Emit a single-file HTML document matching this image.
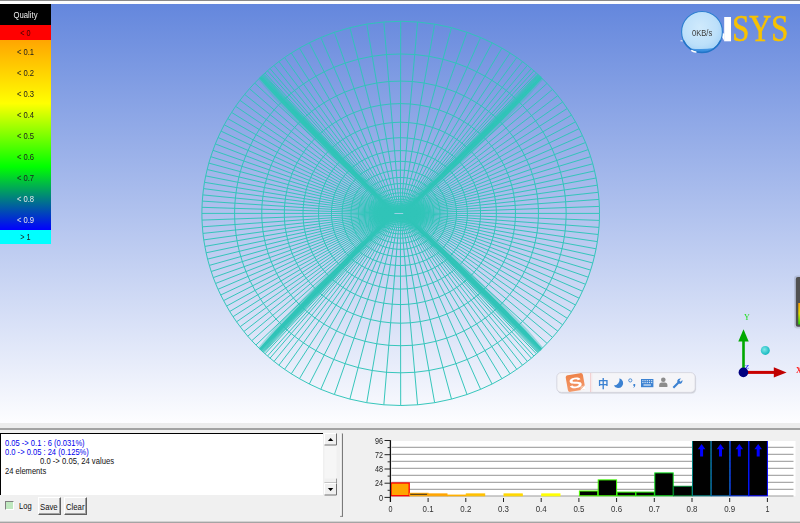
<!DOCTYPE html>
<html><head><meta charset="utf-8"><title>Quality</title>
<style>
html,body{margin:0;padding:0;background:#f0f0f0;}
body{width:800px;height:523px;overflow:hidden;position:relative;font-family:"Liberation Sans","Noto Sans CJK SC",sans-serif;}
#root{position:absolute;left:0;top:0;width:800px;height:523px;overflow:hidden;background:#f0f0f0;opacity:0.999;will-change:opacity;}
#topline{position:absolute;left:0;top:0;width:800px;height:1px;background:#8a8a8a;}
#topwhite{position:absolute;left:0;top:1px;width:800px;height:3px;background:#fdfdfd;}
#view{position:absolute;left:0;top:4px;width:800px;height:419px;background:linear-gradient(to bottom,#6487dd 0%,#fdfdff 100%);}
#sep1{position:absolute;left:0;top:423px;width:800px;height:5px;background:#ececec;}
#sep2{position:absolute;left:0;top:428px;width:800px;height:2px;background:#a2a2a2;}
#bottomline{position:absolute;left:0;top:521px;width:800px;height:2px;background:linear-gradient(to bottom,#d2d2d2 0,#d2d2d2 50%,#a4a4a4 50%,#a4a4a4 100%);}
svg{position:absolute;left:0;top:0;will-change:transform;}
svg text{font-family:"Liberation Sans",sans-serif;}
#log{position:absolute;left:0;top:433px;width:323px;height:62px;background:#fff;border-left:1px solid #000;border-top:1px solid #000;box-sizing:border-box;}
.t{position:absolute;white-space:nowrap;font-size:9px;line-height:10px;transform-origin:0 0;}
.btn{position:absolute;top:497px;height:18px;box-sizing:border-box;background:#f0f0f0;border-top:1px solid #fff;border-left:1px solid #fff;border-right:1px solid #606060;border-bottom:1px solid #606060;box-shadow:inset -1px -1px 0 #a0a0a0;}
</style></head><body><div id="root">
<div id="topline"></div><div id="topwhite"></div>
<div id="view"></div>
<div id="sep1"></div><div id="sep2"></div>
<div id="log"></div>
<div class="t" style="left:5px;top:437.7px;color:#0000ee;transform:scaleX(0.84)">0.05 -&gt; 0.1 : 6 (0.031%)</div>
<div class="t" style="left:5px;top:447px;color:#0000ee;transform:scaleX(0.84)">0.0 -&gt; 0.05 : 24 (0.125%)</div>
<div class="t" style="left:39.8px;top:456.4px;color:#111;transform:scaleX(0.853)">0.0 -&gt; 0.05, 24 values</div>
<div class="t" style="left:5px;top:465.6px;color:#111;transform:scaleX(0.84)">24 elements</div>
<div style="position:absolute;left:5px;top:501px;width:9px;height:9px;box-sizing:border-box;background:#bfe8bf;border-top:1px solid #808080;border-left:1px solid #808080;border-right:1px solid #fff;border-bottom:1px solid #fff;"></div>
<div class="t" style="left:19px;top:501.2px;color:#111;transform:scaleX(0.84)">Log</div>
<div class="btn" style="left:38px;width:23px;"></div>
<div class="t" style="left:40px;top:501.8px;color:#111;transform:scaleX(0.86)">Save</div>
<div class="btn" style="left:64px;width:23px;"></div>
<div class="t" style="left:66px;top:501.8px;color:#111;transform:scaleX(0.86)">Clear</div>
<div id="bottomline"></div>
<svg width="800" height="523" viewBox="0 0 800 523">
<defs>
<linearGradient id="lg" x1="0" y1="0" x2="0" y2="1">
<stop offset="0" stop-color="#ffa500"/><stop offset="0.3333" stop-color="#ffff00"/><stop offset="0.6667" stop-color="#00ff00"/><stop offset="1" stop-color="#0000ff"/>
</linearGradient>
<radialGradient id="bub" cx="0.45" cy="0.4" r="0.6"><stop offset="0" stop-color="#d0eafc"/><stop offset="0.7" stop-color="#bde0fa"/><stop offset="1" stop-color="#a8d4f7"/></radialGradient>
<radialGradient id="cy" cx="0.4" cy="0.4" r="0.6"><stop offset="0" stop-color="#7fe8e8"/><stop offset="1" stop-color="#14b8c0"/></radialGradient>
<linearGradient id="cres" x1="0" y1="0" x2="0" y2="1"><stop offset="0" stop-color="#9ccdf4"/><stop offset="0.45" stop-color="#4a9be6"/><stop offset="1" stop-color="#2f86dc"/></linearGradient>
<linearGradient id="sg" x1="0" y1="0" x2="0" y2="1"><stop offset="0" stop-color="#ee8248"/><stop offset="1" stop-color="#f4996a"/></linearGradient>
<radialGradient id="blob" cx="0.5" cy="0.5" r="0.5"><stop offset="0" stop-color="#30c4b8" stop-opacity="1"/><stop offset="0.5" stop-color="#30c4b8" stop-opacity="0.9"/><stop offset="1" stop-color="#30c4b8" stop-opacity="0"/></radialGradient>
<linearGradient id="bar2" x1="0" y1="0" x2="0" y2="1"><stop offset="0" stop-color="#ffa000"/><stop offset="0.5" stop-color="#e0e000"/><stop offset="1" stop-color="#20e000"/></linearGradient>
<clipPath id="vp"><rect x="0" y="4" width="800" height="419"/></clipPath>
</defs>
<!-- mesh -->
<g transform="translate(400.7 213.4) scale(1.0349 1)" fill="none" stroke="#30c4b8" stroke-width="0.95" stroke-linejoin="round">
<path d="M135.8 -135.8L132.9 -138.7L128.7 -142.6L122.4 -148L117.7 -151.8L112.2 -155.9L105.7 -160.4L97.8 -165.3L88.3 -170.6L77.2 -175.9L64.1 -181.1L49.1 -185.7L32.8 -189.3L16.3 -191.4L0 -192.1L-16.3 -191.4L-32.8 -189.3L-49.1 -185.7L-64.1 -181.1L-77.2 -175.9L-88.3 -170.6L-97.8 -165.3L-105.7 -160.4L-112.2 -155.9L-117.7 -151.8L-122.4 -148L-126.3 -144.8L-131.1 -140.4L-134.3 -137.4L-141.1 -130.4L-146.1 -124.7L-150.8 -119L-155.3 -113.1L-159.5 -107.1L-163.4 -101L-167.1 -94.8L-170.5 -88.6L-173.6 -82.3L-176.5 -75.9L-179.1 -69.5L-181.4 -63.1L-183.5 -56.7L-185.4 -50.3L-187 -43.9L-188.4 -37.5L-189.6 -31.1L-190.5 -24.8L-191.2 -18.5L-191.7 -12.3L-192 -6.1L-192.1 0L-192 6.7L-191.6 13.4L-191.1 20L-190.3 26.5L-189.2 33L-188 39.4L-186.6 45.7L-184.9 52L-183.1 58.1L-181.1 64.2L-178.9 70.1L-176.5 75.9L-173.9 81.6L-171.1 87.2L-168.2 92.7L-165.2 98.1L-162 103.3L-158.6 108.4L-155.1 113.3L-151.5 118.1L-147.8 122.8L-143.9 127.3L-139.9 131.6L-135.8 135.8L-132.9 138.7L-128.7 142.6L-122.4 148L-117.7 151.8L-112.2 155.9L-105.7 160.4L-97.8 165.3L-88.3 170.6L-77.2 175.9L-64.1 181.1L-49.1 185.7L-32.8 189.3L-16.3 191.4L0 192.1L16.3 191.4L32.8 189.3L49.1 185.7L64.1 181.1L77.2 175.9L88.3 170.6L97.8 165.3L105.7 160.4L112.2 155.9L117.7 151.8L122.4 148L126.3 144.8L131.1 140.4L134.3 137.4L141.4 130L146.7 124L151.8 117.8L156.5 111.4L160.9 104.9L165 98.3L168.9 91.6L172.4 84.8L175.6 77.8L178.6 70.9L181.2 63.8L183.5 56.7L185.6 49.6L187.3 42.5L188.8 35.4L190 28.2L190.9 21.1L191.6 14L192 7L192.1 0L192 -7L191.6 -14L190.9 -21.1L190 -28.2L188.8 -35.4L187.3 -42.5L185.6 -49.6L183.5 -56.7L181.2 -63.8L178.6 -70.9L175.6 -77.8L172.4 -84.8L168.9 -91.6L165 -98.3L160.9 -104.9L156.5 -111.4L151.8 -117.8L146.7 -124L141.4 -130ZM113.2 -112.7L110.7 -115.1L107.2 -118.4L102 -122.9L98.1 -126L93.5 -129.4L88.1 -133.1L81.4 -137.2L73.5 -141.6L64.3 -146L53.4 -150.3L40.8 -154.2L27.3 -157.1L13.6 -158.9L0 -159.4L-13.7 -158.9L-27.5 -157.1L-41.1 -154.2L-53.7 -150.3L-64.7 -146L-73.9 -141.6L-81.9 -137.2L-88.6 -133.1L-94 -129.4L-98.6 -126L-102.5 -122.9L-105.8 -120.2L-109.8 -116.5L-112.4 -114L-118.2 -108.2L-122.3 -103.5L-126.2 -98.7L-129.9 -93.8L-133.4 -88.9L-136.7 -83.8L-139.7 -78.7L-142.5 -73.5L-145.1 -68.3L-147.5 -63L-149.7 -57.7L-151.6 -52.4L-153.4 -47.1L-154.9 -41.8L-156.3 -36.4L-157.4 -31.1L-158.4 -25.8L-159.1 -20.6L-159.7 -15.4L-160.2 -10.2L-160.4 -5.1L-160.5 0L-160.4 5.6L-160.1 11.1L-159.6 16.6L-159 22L-158.1 27.4L-157.1 32.7L-155.9 38L-154.5 43.1L-153 48.2L-151.3 53.3L-149.5 58.2L-147.5 63L-145.4 67.8L-143.1 72.4L-140.7 77L-138.1 81.4L-135.5 85.7L-132.7 89.9L-129.8 94L-126.8 98L-123.7 101.9L-120.5 105.6L-117.2 109.2L-113.8 112.7L-111.3 115.1L-107.8 118.4L-102.5 122.9L-98.6 126L-94 129.4L-88.6 133.1L-81.9 137.2L-73.9 141.6L-64.7 146L-53.7 150.3L-41.1 154.2L-27.5 157.1L-13.7 158.9L0 159.4L13.6 158.9L27.3 157.1L40.8 154.2L53.4 150.3L64.3 146L73.5 141.6L81.4 137.2L88.1 133.1L93.5 129.4L98.1 126L102 122.9L105.2 120.2L109.2 116.5L111.8 114L117.8 107.9L122.2 102.9L126.4 97.8L130.3 92.5L134 87.1L137.4 81.6L140.6 76L143.5 70.3L146.2 64.6L148.6 58.8L150.8 53L152.7 47.1L154.4 41.2L155.9 35.3L157.1 29.4L158.1 23.4L158.9 17.5L159.4 11.7L159.7 5.8L159.9 0L159.7 -5.8L159.4 -11.7L158.9 -17.5L158.1 -23.4L157.1 -29.4L155.9 -35.3L154.4 -41.2L152.7 -47.1L150.8 -53L148.6 -58.8L146.2 -64.6L143.5 -70.3L140.6 -76L137.4 -81.6L134 -87.1L130.3 -92.5L126.4 -97.8L122.2 -102.9L117.8 -107.9ZM94.3 -93.6L92.3 -95.6L89.3 -98.3L85 -102L81.7 -104.6L77.9 -107.4L73.4 -110.5L67.8 -113.9L61.2 -117.5L53.5 -121.2L44.4 -124.7L34 -127.9L22.7 -130.4L11.3 -131.9L-0.1 -132.3L-11.5 -131.9L-23.1 -130.4L-34.5 -127.9L-45 -124.7L-54.2 -121.2L-62 -117.5L-68.7 -113.9L-74.3 -110.5L-78.8 -107.4L-82.7 -104.6L-86 -102L-88.7 -99.7L-92.2 -96.7L-94.4 -94.7L-99.1 -89.8L-102.5 -85.9L-105.8 -82L-108.9 -77.9L-111.8 -73.8L-114.5 -69.6L-117 -65.3L-119.3 -61L-121.5 -56.7L-123.5 -52.3L-125.3 -47.9L-126.9 -43.5L-128.3 -39.1L-129.6 -34.7L-130.7 -30.2L-131.7 -25.8L-132.5 -21.5L-133.1 -17.1L-133.6 -12.8L-134 -8.5L-134.2 -4.2L-134.2 0L-134.2 4.6L-133.9 9.2L-133.5 13.8L-133 18.3L-132.3 22.7L-131.4 27.1L-130.4 31.5L-129.3 35.8L-128 40L-126.6 44.2L-125.1 48.3L-123.5 52.3L-121.7 56.2L-119.8 60.1L-117.8 63.9L-115.7 67.6L-113.5 71.1L-111.2 74.6L-108.8 78L-106.3 81.4L-103.7 84.6L-101 87.7L-98.3 90.7L-95.5 93.6L-93.4 95.6L-90.4 98.3L-86 102L-82.7 104.6L-78.8 107.4L-74.3 110.5L-68.7 113.9L-62 117.5L-54.2 121.2L-45 124.7L-34.5 127.9L-23.1 130.4L-11.5 131.9L-0.1 132.3L11.3 131.9L22.7 130.4L34 127.9L44.4 124.7L53.5 121.2L61.2 117.5L67.8 113.9L73.4 110.5L77.9 107.4L81.7 104.6L85 102L87.7 99.7L91.1 96.7L93.2 94.7L98.2 89.6L101.8 85.4L105.3 81.1L108.6 76.8L111.6 72.3L114.4 67.7L117.1 63.1L119.5 58.4L121.7 53.6L123.8 48.8L125.6 44L127.2 39.1L128.6 34.2L129.8 29.3L130.8 24.4L131.7 19.5L132.3 14.6L132.7 9.7L133 4.8L133.1 0L133 -4.8L132.7 -9.7L132.3 -14.6L131.7 -19.5L130.8 -24.4L129.8 -29.3L128.6 -34.2L127.2 -39.1L125.6 -44L123.8 -48.8L121.7 -53.6L119.5 -58.4L117.1 -63.1L114.4 -67.7L111.6 -72.3L108.6 -76.8L105.3 -81.1L101.8 -85.4L98.2 -89.6ZM78.7 -77.7L77 -79.3L74.5 -81.6L70.9 -84.6L68.2 -86.8L65 -89.1L61.2 -91.7L56.6 -94.5L51 -97.6L44.6 -100.6L37 -103.5L28.3 -106.2L18.9 -108.2L9.3 -109.4L-0.1 -109.8L-9.7 -109.4L-19.4 -108.2L-29 -106.2L-37.9 -103.5L-45.6 -100.6L-52.1 -97.6L-57.7 -94.5L-62.4 -91.7L-66.3 -89.1L-69.5 -86.8L-72.3 -84.6L-74.6 -82.8L-77.5 -80.3L-79.1 -78.8L-83.3 -74.5L-86.1 -71.3L-88.9 -68L-91.4 -64.7L-93.8 -61.2L-96 -57.7L-98.1 -54.2L-100.1 -50.6L-101.9 -47L-103.5 -43.4L-105 -39.8L-106.3 -36.1L-107.5 -32.4L-108.6 -28.8L-109.5 -25.1L-110.3 -21.4L-111 -17.8L-111.5 -14.2L-111.9 -10.6L-112.2 -7L-112.4 -3.5L-112.4 0L-112.4 3.8L-112.2 7.6L-111.9 11.4L-111.4 15.2L-110.8 18.9L-110.1 22.5L-109.3 26.1L-108.4 29.7L-107.3 33.2L-106.1 36.7L-104.9 40.1L-103.5 43.4L-102 46.7L-100.5 49.9L-98.8 53L-97.1 56.1L-95.2 59.1L-93.3 62L-91.3 64.8L-89.2 67.5L-87.1 70.2L-84.9 72.8L-82.6 75.3L-80.3 77.7L-78.5 79.3L-76 81.6L-72.3 84.6L-69.5 86.8L-66.3 89.1L-62.4 91.7L-57.7 94.5L-52.1 97.6L-45.6 100.6L-37.9 103.5L-29 106.2L-19.4 108.2L-9.7 109.4L-0.1 109.8L9.3 109.4L18.9 108.2L28.3 106.2L37 103.5L44.6 100.6L51 97.6L56.6 94.5L61.2 91.7L65 89.1L68.2 86.8L70.9 84.6L73.1 82.8L76 80.3L77.8 78.6L81.9 74.3L84.9 70.9L87.8 67.3L90.5 63.7L93 60L95.4 56.2L97.6 52.4L99.6 48.5L101.5 44.5L103.1 40.5L104.6 36.5L106 32.4L107.1 28.4L108.2 24.3L109 20.2L109.7 16.1L110.2 12.1L110.6 8L110.8 4L110.9 0L110.8 -4L110.6 -8L110.2 -12.1L109.7 -16.1L109 -20.2L108.2 -24.3L107.1 -28.4L106 -32.4L104.6 -36.5L103.1 -40.5L101.5 -44.5L99.6 -48.5L97.6 -52.4L95.4 -56.2L93 -60L90.5 -63.7L87.8 -67.3L84.9 -70.9L81.9 -74.3ZM65.7 -64.5L64.3 -65.8L62.2 -67.7L59.2 -70.2L56.9 -72L54.2 -74L51.1 -76.1L47.2 -78.5L42.6 -81L37.2 -83.5L30.9 -85.9L23.6 -88.1L15.7 -89.8L7.8 -90.8L-0.2 -91.2L-8.2 -90.8L-16.4 -89.8L-24.4 -88.1L-31.9 -85.9L-38.4 -83.5L-43.9 -81L-48.6 -78.5L-52.6 -76.1L-55.8 -74L-58.6 -72L-60.9 -70.2L-62.9 -68.7L-65.3 -66.6L-66.7 -65.4L-70.2 -61.9L-72.5 -59.2L-74.8 -56.5L-76.9 -53.7L-78.9 -50.8L-80.8 -47.9L-82.5 -45L-84.1 -42L-85.6 -39L-86.9 -36L-88.2 -33L-89.3 -30L-90.3 -26.9L-91.2 -23.9L-92 -20.8L-92.6 -17.8L-93.2 -14.8L-93.6 -11.8L-93.9 -8.8L-94.2 -5.8L-94.3 -2.9L-94.4 0L-94.3 3.2L-94.1 6.3L-93.9 9.5L-93.5 12.6L-93 15.7L-92.4 18.7L-91.7 21.7L-91 24.7L-90.1 27.6L-89.1 30.4L-88.1 33.3L-86.9 36L-85.7 38.7L-84.4 41.4L-83 44L-81.6 46.5L-80.1 49L-78.5 51.4L-76.8 53.8L-75.1 56L-73.3 58.3L-71.5 60.4L-69.6 62.5L-67.7 64.5L-66.2 65.8L-64.1 67.7L-60.9 70.2L-58.6 72L-55.8 74L-52.6 76.1L-48.6 78.5L-43.9 81L-38.4 83.5L-31.9 85.9L-24.4 88.1L-16.4 89.8L-8.2 90.8L-0.2 91.2L7.8 90.8L15.7 89.8L23.6 88.1L30.9 85.9L37.2 83.5L42.6 81L47.2 78.5L51.1 76.1L54.2 74L56.9 72L59.2 70.2L61.1 68.7L63.4 66.6L65 65.2L68.4 61.7L70.9 58.8L73.3 55.9L75.5 52.9L77.6 49.8L79.6 46.7L81.4 43.5L83.1 40.2L84.6 36.9L86 33.6L87.3 30.3L88.4 26.9L89.3 23.6L90.2 20.2L90.9 16.8L91.4 13.4L91.9 10L92.2 6.7L92.4 3.3L92.4 0L92.4 -3.3L92.2 -6.7L91.9 -10L91.4 -13.4L90.9 -16.8L90.2 -20.2L89.3 -23.6L88.4 -26.9L87.3 -30.3L86 -33.6L84.6 -36.9L83.1 -40.2L81.4 -43.5L79.6 -46.7L77.6 -49.8L75.5 -52.9L73.3 -55.9L70.9 -58.8L68.4 -61.7ZM55 -53.5L53.8 -54.6L52 -56.2L49.5 -58.3L47.6 -59.8L45.3 -61.4L42.7 -63.2L39.5 -65.1L35.6 -67.2L31.1 -69.3L25.8 -71.3L19.7 -73.2L13.1 -74.6L6.4 -75.4L-0.2 -75.7L-7 -75.4L-13.9 -74.6L-20.7 -73.2L-27 -71.3L-32.4 -69.3L-37.1 -67.2L-41.1 -65.1L-44.4 -63.2L-47.2 -61.4L-49.5 -59.8L-51.5 -58.3L-53.1 -57L-55.2 -55.3L-56.4 -54.3L-59.3 -51.3L-61.2 -49.1L-63.1 -46.9L-64.9 -44.5L-66.5 -42.2L-68.1 -39.8L-69.5 -37.3L-70.8 -34.9L-72.1 -32.4L-73.2 -29.9L-74.2 -27.4L-75.2 -24.9L-76 -22.3L-76.7 -19.8L-77.4 -17.3L-77.9 -14.8L-78.4 -12.3L-78.7 -9.8L-79 -7.3L-79.2 -4.8L-79.3 -2.4L-79.4 0L-79.3 2.6L-79.2 5.3L-78.9 7.9L-78.6 10.4L-78.2 13L-77.7 15.5L-77.2 18L-76.5 20.5L-75.8 22.9L-75 25.3L-74.1 27.6L-73.2 29.9L-72.2 32.2L-71.1 34.4L-70 36.5L-68.8 38.6L-67.5 40.7L-66.2 42.7L-64.8 44.6L-63.4 46.5L-61.9 48.4L-60.4 50.1L-58.8 51.8L-57.2 53.5L-55.9 54.6L-54.1 56.2L-51.5 58.3L-49.5 59.8L-47.2 61.4L-44.4 63.2L-41.1 65.1L-37.1 67.2L-32.4 69.3L-27 71.3L-20.7 73.2L-13.9 74.6L-7 75.4L-0.2 75.7L6.4 75.4L13.1 74.6L19.7 73.2L25.8 71.3L31.1 69.3L35.6 67.2L39.5 65.1L42.7 63.2L45.3 61.4L47.6 59.8L49.5 58.3L51.1 57L53 55.3L54.2 54.3L57.2 51.2L59.3 48.8L61.2 46.4L63.1 43.9L64.8 41.3L66.5 38.7L68 36.1L69.4 33.4L70.6 30.7L71.8 27.9L72.8 25.1L73.8 22.4L74.6 19.6L75.3 16.7L75.8 13.9L76.3 11.1L76.7 8.3L76.9 5.5L77.1 2.8L77.1 0L77.1 -2.8L76.9 -5.5L76.7 -8.3L76.3 -11.1L75.8 -13.9L75.3 -16.7L74.6 -19.6L73.8 -22.4L72.8 -25.1L71.8 -27.9L70.6 -30.7L69.4 -33.4L68 -36.1L66.5 -38.7L64.8 -41.3L63.1 -43.9L61.2 -46.4L59.3 -48.8L57.2 -51.2ZM46 -44.4L45 -45.3L43.6 -46.6L41.4 -48.4L39.8 -49.6L37.9 -51L35.7 -52.4L33 -54.1L29.8 -55.8L26 -57.5L21.6 -59.2L16.4 -60.7L10.9 -61.9L5.3 -62.6L-0.2 -62.8L-6 -62.6L-11.8 -61.9L-17.5 -60.7L-22.9 -59.2L-27.5 -57.5L-31.4 -55.8L-34.8 -54.1L-37.7 -52.4L-40 -51L-42 -49.6L-43.7 -48.4L-45 -47.3L-46.8 -45.9L-47.8 -45L-50.2 -42.6L-51.9 -40.8L-53.4 -38.9L-54.9 -37L-56.2 -35L-57.5 -33L-58.7 -31L-59.8 -29L-60.9 -26.9L-61.8 -24.8L-62.6 -22.7L-63.4 -20.6L-64.1 -18.5L-64.7 -16.4L-65.2 -14.4L-65.7 -12.3L-66.1 -10.2L-66.4 -8.1L-66.6 -6.1L-66.8 -4L-66.9 -2L-66.9 0L-66.9 2.2L-66.8 4.4L-66.6 6.5L-66.3 8.7L-66 10.8L-65.6 12.9L-65.1 15L-64.6 17L-64 19L-63.3 21L-62.6 22.9L-61.8 24.8L-60.9 26.7L-60.1 28.5L-59.1 30.3L-58.1 32.1L-57.1 33.8L-56 35.4L-54.8 37L-53.6 38.6L-52.4 40.1L-51.1 41.6L-49.8 43L-48.5 44.4L-47.4 45.3L-45.9 46.6L-43.7 48.4L-42 49.6L-40 51L-37.7 52.4L-34.8 54.1L-31.4 55.8L-27.5 57.5L-22.9 59.2L-17.5 60.7L-11.8 61.9L-6 62.6L-0.2 62.8L5.3 62.6L10.9 61.9L16.4 60.7L21.6 59.2L26 57.5L29.8 55.8L33 54.1L35.7 52.4L37.9 51L39.8 49.6L41.4 48.4L42.8 47.3L44.4 45.9L45.4 45L47.9 42.5L49.6 40.5L51.2 38.5L52.8 36.4L54.2 34.3L55.6 32.1L56.8 29.9L58 27.7L59 25.5L60 23.2L60.9 20.9L61.6 18.6L62.3 16.2L62.9 13.9L63.4 11.6L63.7 9.2L64.1 6.9L64.3 4.6L64.4 2.3L64.4 0L64.4 -2.3L64.3 -4.6L64.1 -6.9L63.7 -9.2L63.4 -11.6L62.9 -13.9L62.3 -16.2L61.6 -18.6L60.9 -20.9L60 -23.2L59 -25.5L58 -27.7L56.8 -29.9L55.6 -32.1L54.2 -34.3L52.8 -36.4L51.2 -38.5L49.6 -40.5L47.9 -42.5ZM38.6 -36.9L37.8 -37.6L36.5 -38.7L34.8 -40.2L33.4 -41.2L31.8 -42.3L29.9 -43.5L27.7 -44.9L24.9 -46.3L21.8 -47.7L18 -49.1L13.8 -50.4L9.1 -51.4L4.4 -51.9L-0.2 -52.1L-5.1 -51.9L-10 -51.4L-14.9 -50.4L-19.4 -49.1L-23.4 -47.7L-26.7 -46.3L-29.6 -44.9L-32 -43.5L-34 -42.3L-35.7 -41.2L-37.2 -40.2L-38.3 -39.3L-39.8 -38.1L-40.7 -37.4L-42.7 -35.4L-44.1 -33.8L-45.4 -32.3L-46.6 -30.7L-47.7 -29.1L-48.8 -27.4L-49.8 -25.7L-50.7 -24L-51.5 -22.3L-52.3 -20.6L-53 -18.9L-53.7 -17.1L-54.2 -15.4L-54.7 -13.7L-55.2 -11.9L-55.6 -10.2L-55.9 -8.5L-56.1 -6.7L-56.3 -5L-56.5 -3.3L-56.5 -1.7L-56.6 0L-56.5 1.8L-56.4 3.6L-56.3 5.4L-56.1 7.2L-55.8 9L-55.5 10.7L-55.1 12.4L-54.6 14.1L-54.1 15.8L-53.6 17.4L-53 19L-52.3 20.6L-51.6 22.2L-50.9 23.7L-50.1 25.2L-49.3 26.6L-48.4 28L-47.5 29.4L-46.5 30.7L-45.5 32L-44.5 33.3L-43.5 34.5L-42.4 35.7L-41.3 36.9L-40.4 37.6L-39.1 38.7L-37.2 40.2L-35.7 41.2L-34 42.3L-32 43.5L-29.6 44.9L-26.7 46.3L-23.4 47.7L-19.4 49.1L-14.9 50.4L-10 51.4L-5.1 51.9L-0.2 52.1L4.4 51.9L9.1 51.4L13.8 50.4L18 49.1L21.8 47.7L24.9 46.3L27.7 44.9L29.9 43.5L31.8 42.3L33.4 41.2L34.8 40.2L35.9 39.3L37.3 38.1L38.1 37.4L40.1 35.3L41.6 33.6L42.9 32L44.2 30.2L45.4 28.5L46.5 26.7L47.6 24.9L48.5 23L49.4 21.1L50.2 19.2L50.9 17.3L51.6 15.4L52.1 13.5L52.6 11.5L53 9.6L53.3 7.7L53.6 5.7L53.7 3.8L53.9 1.9L53.9 0L53.9 -1.9L53.7 -3.8L53.6 -5.7L53.3 -7.7L53 -9.6L52.6 -11.5L52.1 -13.5L51.6 -15.4L50.9 -17.3L50.2 -19.2L49.4 -21.1L48.5 -23L47.6 -24.9L46.5 -26.7L45.4 -28.5L44.2 -30.2L42.9 -32L41.6 -33.6L40.1 -35.3ZM32.5 -30.6L31.7 -31.2L30.7 -32.1L29.2 -33.3L28.1 -34.2L26.7 -35.1L25.1 -36.1L23.2 -37.2L20.9 -38.4L18.3 -39.6L15.1 -40.8L11.5 -41.8L7.6 -42.6L3.7 -43.1L-0.2 -43.3L-4.4 -43.1L-8.6 -42.6L-12.8 -41.8L-16.6 -40.8L-20 -39.6L-22.8 -38.4L-25.3 -37.2L-27.4 -36.1L-29.1 -35.1L-30.5 -34.2L-31.8 -33.3L-32.8 -32.6L-34.1 -31.6L-34.8 -31L-36.5 -29.4L-37.6 -28.1L-38.7 -26.8L-39.7 -25.5L-40.6 -24.1L-41.5 -22.7L-42.3 -21.4L-43.1 -19.9L-43.8 -18.5L-44.5 -17.1L-45 -15.7L-45.6 -14.2L-46.1 -12.8L-46.5 -11.3L-46.8 -9.9L-47.2 -8.4L-47.4 -7L-47.6 -5.6L-47.8 -4.2L-47.9 -2.8L-48 -1.4L-48 0L-48 1.5L-47.9 3L-47.7 4.5L-47.6 6L-47.3 7.4L-47.1 8.9L-46.7 10.3L-46.4 11.7L-46 13.1L-45.5 14.5L-45 15.8L-44.5 17.1L-43.9 18.4L-43.3 19.6L-42.6 20.9L-41.9 22.1L-41.2 23.3L-40.4 24.4L-39.7 25.5L-38.8 26.6L-38 27.6L-37.1 28.7L-36.2 29.6L-35.3 30.6L-34.5 31.2L-33.4 32.1L-31.8 33.3L-30.5 34.2L-29.1 35.1L-27.4 36.1L-25.3 37.2L-22.8 38.4L-20 39.6L-16.6 40.8L-12.8 41.8L-8.6 42.6L-4.4 43.1L-0.2 43.3L3.7 43.1L7.6 42.6L11.5 41.8L15.1 40.8L18.3 39.6L20.9 38.4L23.2 37.2L25.1 36.1L26.7 35.1L28.1 34.2L29.2 33.3L30.1 32.6L31.3 31.6L32 31L33.7 29.3L34.9 27.9L36.1 26.5L37.1 25.1L38.1 23.6L39 22.1L39.9 20.6L40.7 19.1L41.4 17.5L42.1 16L42.7 14.4L43.2 12.8L43.7 11.2L44.1 9.6L44.4 8L44.7 6.4L44.9 4.8L45 3.2L45.1 1.6L45.1 0L45.1 -1.6L45 -3.2L44.9 -4.8L44.7 -6.4L44.4 -8L44.1 -9.6L43.7 -11.2L43.2 -12.8L42.7 -14.4L42.1 -16L41.4 -17.5L40.7 -19.1L39.9 -20.6L39 -22.1L38.1 -23.6L37.1 -25.1L36.1 -26.5L34.9 -27.9L33.7 -29.3ZM27.4 -25.4L26.7 -25.9L25.9 -26.7L24.6 -27.7L23.6 -28.4L22.5 -29.1L21.2 -30L19.5 -30.9L17.6 -31.9L15.4 -32.9L12.7 -33.9L9.7 -34.7L6.4 -35.4L3.1 -35.8L-0.2 -35.9L-3.8 -35.8L-7.4 -35.4L-11 -34.7L-14.3 -33.9L-17.2 -32.9L-19.6 -31.9L-21.7 -30.9L-23.5 -30L-25 -29.1L-26.2 -28.4L-27.3 -27.7L-28.1 -27.1L-29.3 -26.2L-29.9 -25.8L-31.3 -24.4L-32.3 -23.3L-33.1 -22.2L-34 -21.1L-34.8 -20L-35.5 -18.9L-36.2 -17.7L-36.8 -16.6L-37.4 -15.4L-37.9 -14.2L-38.4 -13L-38.9 -11.8L-39.3 -10.6L-39.6 -9.4L-39.9 -8.2L-40.2 -7L-40.4 -5.8L-40.6 -4.6L-40.7 -3.5L-40.8 -2.3L-40.8 -1.1L-40.9 0L-40.8 1.3L-40.8 2.5L-40.7 3.7L-40.5 5L-40.3 6.2L-40.1 7.4L-39.8 8.5L-39.5 9.7L-39.2 10.9L-38.8 12L-38.4 13.1L-37.9 14.2L-37.5 15.3L-36.9 16.3L-36.4 17.3L-35.8 18.3L-35.2 19.3L-34.6 20.3L-34 21.2L-33.3 22.1L-32.6 22.9L-31.9 23.8L-31.1 24.6L-30.3 25.4L-29.7 25.9L-28.7 26.7L-27.3 27.7L-26.2 28.4L-25 29.1L-23.5 30L-21.7 30.9L-19.6 31.9L-17.2 32.9L-14.3 33.9L-11 34.7L-7.4 35.4L-3.8 35.8L-0.2 35.9L3.1 35.8L6.4 35.4L9.7 34.7L12.7 33.9L15.4 32.9L17.6 31.9L19.5 30.9L21.2 30L22.5 29.1L23.6 28.4L24.6 27.7L25.4 27.1L26.4 26.2L26.9 25.8L28.4 24.3L29.4 23.2L30.3 22L31.2 20.8L32 19.6L32.8 18.4L33.5 17.1L34.2 15.8L34.8 14.6L35.3 13.2L35.8 11.9L36.3 10.6L36.7 9.3L37 7.9L37.3 6.6L37.5 5.3L37.7 3.9L37.8 2.6L37.9 1.3L37.9 0L37.9 -1.3L37.8 -2.6L37.7 -3.9L37.5 -5.3L37.3 -6.6L37 -7.9L36.7 -9.3L36.3 -10.6L35.8 -11.9L35.3 -13.2L34.8 -14.6L34.2 -15.8L33.5 -17.1L32.8 -18.4L32 -19.6L31.2 -20.8L30.3 -22L29.4 -23.2L28.4 -24.3ZM23.1 -21.1L22.6 -21.5L21.9 -22.1L20.8 -23L19.9 -23.6L19 -24.2L17.9 -24.9L16.5 -25.7L14.8 -26.5L12.9 -27.3L10.7 -28.1L8.1 -28.8L5.3 -29.4L2.5 -29.7L-0.2 -29.8L-3.3 -29.7L-6.4 -29.4L-9.5 -28.8L-12.3 -28.1L-14.8 -27.3L-16.9 -26.5L-18.7 -25.7L-20.3 -24.9L-21.6 -24.2L-22.6 -23.6L-23.6 -23L-24.3 -22.5L-25.3 -21.8L-25.8 -21.4L-27 -20.2L-27.8 -19.4L-28.5 -18.5L-29.2 -17.5L-29.9 -16.6L-30.5 -15.7L-31.1 -14.7L-31.6 -13.7L-32.1 -12.8L-32.5 -11.8L-32.9 -10.8L-33.3 -9.8L-33.6 -8.8L-33.9 -7.8L-34.2 -6.8L-34.4 -5.8L-34.6 -4.8L-34.7 -3.8L-34.8 -2.9L-34.9 -1.9L-34.9 -0.9L-34.9 0L-34.9 1L-34.9 2.1L-34.8 3.1L-34.7 4.1L-34.5 5.1L-34.3 6.1L-34.1 7.1L-33.8 8.1L-33.6 9L-33.2 10L-32.9 10.9L-32.5 11.8L-32.1 12.7L-31.7 13.5L-31.2 14.4L-30.8 15.2L-30.3 16L-29.8 16.8L-29.2 17.6L-28.7 18.3L-28.1 19L-27.5 19.7L-26.9 20.4L-26.2 21.1L-25.7 21.4L-24.8 22.1L-23.6 23L-22.6 23.6L-21.6 24.2L-20.3 24.9L-18.7 25.7L-16.9 26.5L-14.8 27.3L-12.3 28.1L-9.5 28.8L-6.4 29.4L-3.3 29.7L-0.2 29.8L2.5 29.7L5.3 29.4L8.1 28.8L10.7 28.1L12.9 27.3L14.8 26.5L16.5 25.7L17.9 24.9L19 24.2L19.9 23.6L20.8 23L21.4 22.5L22.3 21.8L22.8 21.4L24 20.2L24.8 19.2L25.6 18.3L26.3 17.3L27 16.3L27.6 15.3L28.2 14.2L28.8 13.2L29.3 12.1L29.7 11L30.2 9.9L30.5 8.8L30.8 7.7L31.1 6.6L31.3 5.5L31.5 4.4L31.7 3.3L31.8 2.2L31.8 1.1L31.8 0L31.8 -1.1L31.8 -2.2L31.7 -3.3L31.5 -4.4L31.3 -5.5L31.1 -6.6L30.8 -7.7L30.5 -8.8L30.2 -9.9L29.7 -11L29.3 -12.1L28.8 -13.2L28.2 -14.2L27.6 -15.3L27 -16.3L26.3 -17.3L25.6 -18.3L24.8 -19.2L24 -20.2ZM19.6 -17.5L19.1 -17.9L18.5 -18.4L17.6 -19.1L16.9 -19.5L16.1 -20.1L15.1 -20.7L13.9 -21.3L12.5 -22L10.9 -22.7L9 -23.3L6.8 -23.9L4.5 -24.4L2.1 -24.6L-0.3 -24.7L-2.9 -24.6L-5.6 -24.4L-8.2 -23.9L-10.7 -23.3L-12.9 -22.7L-14.7 -22L-16.3 -21.3L-17.6 -20.7L-18.7 -20.1L-19.7 -19.5L-20.5 -19.1L-21.1 -18.6L-22 -18.1L-22.5 -17.7L-23.5 -16.8L-24.1 -16.1L-24.7 -15.3L-25.3 -14.6L-25.8 -13.8L-26.3 -13L-26.8 -12.2L-27.3 -11.4L-27.7 -10.6L-28 -9.8L-28.4 -9L-28.7 -8.1L-28.9 -7.3L-29.2 -6.5L-29.4 -5.7L-29.6 -4.8L-29.7 -4L-29.8 -3.2L-29.9 -2.4L-30 -1.6L-30 -0.8L-30 0L-30 0.9L-30 1.7L-29.9 2.6L-29.8 3.4L-29.7 4.2L-29.5 5.1L-29.3 5.9L-29.1 6.7L-28.9 7.5L-28.6 8.3L-28.3 9L-28 9.8L-27.7 10.5L-27.3 11.2L-27 11.9L-26.6 12.6L-26.2 13.3L-25.7 14L-25.3 14.6L-24.8 15.2L-24.3 15.8L-23.8 16.4L-23.3 17L-22.8 17.5L-22.3 17.9L-21.5 18.4L-20.5 19.1L-19.7 19.5L-18.7 20.1L-17.6 20.7L-16.3 21.3L-14.7 22L-12.9 22.7L-10.7 23.3L-8.2 23.9L-5.6 24.4L-2.9 24.6L-0.3 24.7L2.1 24.6L4.5 24.4L6.8 23.9L9 23.3L10.9 22.7L12.5 22L13.9 21.3L15.1 20.7L16.1 20.1L16.9 19.5L17.6 19.1L18.2 18.6L18.9 18.1L19.4 17.7L20.3 16.7L21 16L21.6 15.2L22.3 14.3L22.8 13.5L23.4 12.7L23.9 11.8L24.3 10.9L24.7 10L25.1 9.1L25.4 8.2L25.7 7.3L26 6.4L26.2 5.5L26.4 4.6L26.6 3.6L26.7 2.7L26.8 1.8L26.8 0.9L26.8 0L26.8 -0.9L26.8 -1.8L26.7 -2.7L26.6 -3.6L26.4 -4.6L26.2 -5.5L26 -6.4L25.7 -7.3L25.4 -8.2L25.1 -9.1L24.7 -10L24.3 -10.9L23.9 -11.8L23.4 -12.7L22.8 -13.5L22.3 -14.3L21.6 -15.2L21 -16L20.3 -16.7ZM16.7 -14.5L16.1 -15L15.4 -15.5L15 -15.8L14.4 -16.2L13.7 -16.7L12.8 -17.1L11.8 -17.7L10.6 -18.2L9.3 -18.8L7.6 -19.4L5.8 -19.9L3.8 -20.2L1.7 -20.5L-0.3 -20.5L-2.6 -20.5L-4.9 -20.2L-7.2 -19.9L-9.4 -19.4L-11.2 -18.8L-12.8 -18.2L-14.2 -17.7L-15.4 -17.1L-16.4 -16.7L-17.2 -16.2L-17.9 -15.8L-18.5 -15.5L-19.2 -15L-19.8 -14.7L-20.5 -13.9L-21.1 -13.3L-21.6 -12.7L-22 -12.1L-22.5 -11.4L-22.9 -10.8L-23.3 -10.1L-23.7 -9.5L-24 -8.8L-24.3 -8.1L-24.6 -7.4L-24.8 -6.7L-25.1 -6.1L-25.3 -5.4L-25.4 -4.7L-25.6 -4L-25.7 -3.3L-25.8 -2.7L-25.9 -2L-25.9 -1.3L-26 -0.7L-26 0L-26 0.7L-25.9 1.4L-25.9 2.1L-25.8 2.8L-25.7 3.5L-25.5 4.2L-25.4 4.9L-25.2 5.6L-25 6.2L-24.8 6.9L-24.6 7.5L-24.3 8.1L-24 8.7L-23.7 9.3L-23.4 9.9L-23.1 10.5L-22.8 11L-22.4 11.6L-22 12.1L-21.6 12.6L-21.2 13.1L-20.8 13.6L-20.4 14.1L-20 14.5L-19.4 14.9L-18.9 15.2L-17.9 15.8L-17.2 16.2L-16.4 16.7L-15.4 17.1L-14.2 17.7L-12.8 18.2L-11.2 18.8L-9.4 19.4L-7.2 19.9L-4.9 20.2L-2.6 20.5L-0.3 20.5L1.7 20.5L3.8 20.2L5.8 19.9L7.6 19.4L9.3 18.8L10.6 18.2L11.8 17.7L12.8 17.1L13.7 16.7L14.4 16.2L15 15.8L15.4 15.5L16.1 15L16.5 14.6L17.3 13.9L17.8 13.3L18.4 12.6L18.9 11.9L19.4 11.2L19.8 10.5L20.2 9.8L20.6 9.1L20.9 8.3L21.2 7.6L21.5 6.8L21.8 6.1L22 5.3L22.2 4.5L22.3 3.8L22.5 3L22.6 2.3L22.6 1.5L22.7 0.7L22.7 0L22.7 -0.7L22.6 -1.5L22.6 -2.3L22.5 -3L22.3 -3.8L22.2 -4.5L22 -5.3L21.8 -6.1L21.5 -6.8L21.2 -7.6L20.9 -8.3L20.6 -9.1L20.2 -9.8L19.8 -10.5L19.4 -11.2L18.9 -11.9L18.4 -12.6L17.8 -13.3L17.3 -13.9ZM14.3 -12.1L13.7 -12.5L13.2 -12.8L12.3 -13.5L11.7 -13.8L10.9 -14.2L10.1 -14.7L9.1 -15.1L7.9 -15.6L6.5 -16.1L4.9 -16.5L3.2 -16.8L1.5 -17L-0.3 -17L-2.3 -17L-4.3 -16.8L-6.4 -16.5L-8.2 -16.1L-9.9 -15.6L-11.3 -15.1L-12.5 -14.7L-13.6 -14.2L-14.4 -13.8L-15.1 -13.5L-15.8 -13.1L-16.6 -12.7L-17.2 -12.3L-18.1 -11.6L-18.5 -11.1L-18.9 -10.6L-19.3 -10L-19.7 -9.5L-20 -9L-20.4 -8.4L-20.7 -7.9L-20.9 -7.3L-21.2 -6.7L-21.4 -6.2L-21.6 -5.6L-22 -4.5L-22.3 -3.3L-22.4 -2.2L-22.6 -1.1L-22.6 0L-22.5 1.2L-22.4 2.4L-22.2 3.5L-22 4.6L-21.6 5.7L-21.2 6.7L-20.7 7.7L-20.2 8.7L-19.6 9.6L-19 10.5L-18.3 11.3L-17.6 12.1L-17 12.5L-16.3 12.8L-15.1 13.5L-14.4 13.8L-13.6 14.2L-12.5 14.7L-11.3 15.1L-9.9 15.6L-8.2 16.1L-6.4 16.5L-4.3 16.8L-2.3 17L-0.3 17L1.5 17L3.2 16.8L4.9 16.5L6.5 16.1L7.9 15.6L9.1 15.1L10.1 14.7L10.9 14.2L11.7 13.8L12.3 13.5L12.8 13.1L13.5 12.7L14 12.3L14.7 11.5L15.2 11L15.7 10.4L16.1 9.9L16.5 9.3L16.8 8.7L17.2 8.1L17.5 7.5L17.8 6.9L18 6.3L18.3 5.7L18.5 5L18.7 4.4L18.8 3.8L19 3.1L19.1 2.5L19.1 1.9L19.2 1.2L19.2 0.6L19.2 0L19.2 -0.6L19.2 -1.2L19.1 -1.9L19.1 -2.5L19 -3.1L18.8 -3.8L18.7 -4.4L18.5 -5L18.3 -5.7L18 -6.3L17.8 -6.9L17.5 -7.5L17.2 -8.1L16.8 -8.7L16.5 -9.3L16.1 -9.9L15.7 -10.4L15.2 -11L14.7 -11.5ZM12.2 -10L11.5 -10.5L11 -10.9L10 -11.5L9.4 -11.8L8.6 -12.2L7.8 -12.6L6.7 -13L5.5 -13.3L4.2 -13.7L2.7 -13.9L1.2 -14.1L-0.3 -14.1L-2.1 -14.1L-3.9 -13.9L-5.6 -13.7L-7.3 -13.3L-8.8 -13L-10 -12.6L-11.1 -12.2L-12 -11.8L-12.8 -11.5L-13.4 -11.2L-14 -10.9L-14.8 -10.5L-15.3 -10.2L-16 -9.6L-16.7 -8.8L-17.4 -7.9L-17.9 -7L-18.4 -6.1L-18.8 -5.1L-19.2 -4.2L-19.4 -3.2L-19.6 -2.3L-19.7 -1.4L-19.8 -0.5L-19.8 0.5L-19.7 1.5L-19.6 2.4L-19.4 3.4L-19.1 4.3L-18.8 5.2L-18.4 6L-18 6.8L-17.6 7.6L-17.1 8.3L-16.5 9L-15.9 9.7L-15.5 10.1L-14.8 10.5L-14 10.9L-13.4 11.2L-12.8 11.5L-12 11.8L-11.1 12.2L-10 12.6L-8.8 13L-7.3 13.3L-5.6 13.7L-3.9 13.9L-2.1 14.1L-0.3 14.1L1.2 14.1L2.7 13.9L4.2 13.7L5.5 13.3L6.7 13L7.8 12.6L8.6 12.2L9.4 11.8L10 11.5L10.5 11.2L11.3 10.7L11.9 10.3L12.7 9.6L13.4 8.7L14.1 7.7L14.7 6.7L15.2 5.7L15.6 4.7L15.9 3.7L16.1 2.6L16.3 1.6L16.4 0.5L16.4 -0.5L16.3 -1.6L16.1 -2.6L15.9 -3.7L15.6 -4.7L15.2 -5.7L14.7 -6.7L14.1 -7.7L13.4 -8.7L12.7 -9.6ZM10.6 -8.3L10 -8.7L9.4 -9L8.6 -9.5L7.4 -10.1L6.7 -10.4L5.8 -10.8L4.7 -11.1L3.6 -11.4L2.3 -11.6L1 -11.7L-0.3 -11.7L-1.9 -11.7L-3.5 -11.6L-5.1 -11.4L-6.6 -11.1L-7.9 -10.8L-9 -10.4L-10 -10.1L-10.8 -9.8L-11.5 -9.5L-12 -9.3L-13 -8.8L-13.6 -8.5L-14.3 -8L-14.9 -7.3L-15.5 -6.5L-15.9 -5.8L-16.3 -5L-16.7 -4.2L-16.9 -3.5L-17.1 -2.7L-17.3 -1.9L-17.4 -1.1L-17.5 -0.4L-17.4 0.4L-17.4 1.2L-17.3 2L-17.1 2.8L-16.9 3.6L-16.6 4.3L-16.3 5L-16 5.7L-15.6 6.3L-15.2 6.9L-14.7 7.5L-14.3 8L-13.8 8.4L-13.2 8.7L-12.5 9L-11.5 9.5L-10.8 9.8L-10 10.1L-9 10.4L-7.9 10.8L-6.6 11.1L-5.1 11.4L-3.5 11.6L-1.9 11.7L-0.3 11.7L1 11.7L2.3 11.6L3.6 11.4L4.7 11.1L5.8 10.8L6.7 10.4L7.4 10.1L8.1 9.8L9.1 9.3L9.8 8.8L10.3 8.5L10.9 7.9L11.5 7.2L12.1 6.4L12.6 5.6L13 4.8L13.3 3.9L13.6 3L13.8 2.2L13.9 1.3L14 0.4L14 -0.4L13.9 -1.3L13.8 -2.2L13.6 -3L13.3 -3.9L13 -4.8L12.6 -5.6L12.1 -6.4L11.5 -7.2L10.9 -7.9ZM9.2 -6.9L8.7 -7.2L7.9 -7.7L7 -8.1L6.4 -8.4L5.8 -8.7L5 -8.9L4.1 -9.2L3.1 -9.4L1.9 -9.6L0.8 -9.7L-0.3 -9.7L-1.7 -9.7L-3.1 -9.6L-4.6 -9.4L-5.9 -9.2L-7.1 -8.9L-8.1 -8.7L-9 -8.4L-9.7 -8.1L-10.3 -7.9L-11.3 -7.5L-11.9 -7.2L-12.5 -7L-13.2 -6.3L-13.7 -5.7L-14.1 -5.1L-14.4 -4.5L-14.7 -3.9L-15 -3.2L-15.2 -2.6L-15.3 -1.9L-15.4 -1.3L-15.5 -0.6L-15.5 0L-15.5 0.7L-15.4 1.3L-15.3 2L-15.2 2.6L-15 3.3L-14.7 3.9L-14.5 4.4L-14.2 5L-13.8 5.5L-13.5 6L-13.1 6.5L-12.7 6.9L-11.9 7.2L-11.3 7.5L-10.3 7.9L-9.7 8.1L-9 8.4L-8.1 8.7L-7.1 8.9L-5.9 9.2L-4.6 9.4L-3.1 9.6L-1.7 9.7L-0.3 9.7L0.8 9.7L1.9 9.6L3.1 9.4L4.1 9.2L5 8.9L5.8 8.7L6.4 8.4L7 8.1L7.9 7.7L8.5 7.3L9 7L9.5 6.6L10 6L10.5 5.3L10.9 4.6L11.2 3.9L11.5 3.2L11.7 2.5L11.9 1.8L12 1.1L12 0.4L12 -0.4L12 -1.1L11.9 -1.8L11.7 -2.5L11.5 -3.2L11.2 -3.9L10.9 -4.6L10.5 -5.3L10 -6L9.5 -6.6ZM8 -5.7L7.4 -6.1L6.9 -6.4L6.1 -6.8L5 -7.2L4.3 -7.4L3.5 -7.6L2.6 -7.8L1.7 -8L0.7 -8.1L-0.3 -8.1L-1.6 -8.1L-2.9 -8L-4.2 -7.8L-5.4 -7.6L-6.5 -7.4L-7.4 -7.2L-8.2 -7L-8.9 -6.8L-9.9 -6.4L-10.7 -6.1L-11.3 -5.8L-11.8 -5.5L-12.2 -5L-12.5 -4.5L-12.9 -4L-13.3 -3.2L-13.6 -2.4L-13.8 -1.6L-13.9 -0.8L-13.9 0L-13.9 0.8L-13.7 1.7L-13.5 2.4L-13.3 3.2L-12.9 3.9L-12.5 4.6L-12.1 5.2L-11.6 5.7L-10.9 6L-10.3 6.2L-9.4 6.6L-8.2 7L-7.4 7.2L-6.5 7.4L-5.4 7.6L-4.2 7.8L-2.9 8L-1.6 8.1L-0.3 8.1L0.7 8.1L1.7 8L2.6 7.8L3.5 7.6L4.3 7.4L5 7.2L5.6 7L6.5 6.6L7.2 6.2L7.7 5.9L8.3 5.5L8.7 5L9.1 4.4L9.4 3.9L9.7 3.3L9.9 2.7L10.1 2.1L10.3 1.5L10.4 0.9L10.4 0L10.4 -0.9L10.3 -1.5L10.1 -2.1L9.9 -2.7L9.7 -3.3L9.4 -3.9L9.1 -4.4L8.7 -5L8.3 -5.5ZM7.1 -4.7L6.5 -5.1L5.7 -5.4L4.9 -5.8L3.8 -6.1L3.1 -6.3L2.3 -6.5L1.4 -6.6L0.6 -6.7L-0.3 -6.7L-1.5 -6.7L-2.6 -6.6L-3.8 -6.5L-4.9 -6.3L-5.9 -6.1L-6.8 -6L-7.5 -5.8L-8.1 -5.6L-9.1 -5.3L-9.8 -5.1L-10.4 -4.8L-11 -4.4L-11.4 -3.7L-11.8 -3.1L-12.1 -2.4L-12.4 -1.8L-12.5 -1.1L-12.6 -0.4L-12.6 0.2L-12.5 0.9L-12.4 1.6L-12.2 2.2L-12 2.9L-11.6 3.4L-11.3 4L-10.9 4.4L-10.4 4.8L-9.8 5.1L-9.1 5.3L-8.1 5.6L-7.5 5.8L-6.8 6L-5.9 6.1L-4.9 6.3L-3.8 6.5L-2.6 6.6L-1.5 6.7L-0.3 6.7L0.6 6.7L1.4 6.6L2.3 6.5L3.1 6.3L3.8 6.1L4.4 6L5.4 5.6L6 5.3L6.7 5L7.3 4.5L7.8 3.9L8.2 3.2L8.6 2.5L8.8 1.7L9 1L9 0.2L9 -0.5L8.9 -1.2L8.7 -2L8.5 -2.7L8.1 -3.4L7.6 -4.1ZM6.3 -3.9L5.6 -4.3L4.7 -4.7L3.9 -4.9L2.7 -5.3L2 -5.4L1.2 -5.5L0.5 -5.6L-0.3 -5.6L-1.4 -5.6L-2.5 -5.5L-3.6 -5.4L-4.6 -5.3L-5.5 -5.1L-6.3 -4.9L-6.9 -4.8L-8 -4.5L-8.8 -4.3L-9.5 -4.1L-10 -3.8L-10.4 -3.3L-10.8 -2.7L-11 -2.2L-11.3 -1.5L-11.4 -0.7L-11.5 0L-11.4 0.8L-11.3 1.5L-11 2.2L-10.7 2.8L-10.3 3.4L-9.9 3.9L-9.3 4.1L-8.4 4.4L-7.5 4.7L-6.3 4.9L-5.5 5.1L-4.6 5.3L-3.6 5.4L-2.5 5.5L-1.4 5.6L-0.3 5.6L0.5 5.6L1.2 5.5L2 5.4L2.7 5.3L3.3 5.1L4.3 4.8L5.1 4.5L5.8 4.2L6.4 3.8L6.9 3.2L7.2 2.7L7.5 2.1L7.7 1.4L7.9 0.8L7.9 0.2L7.9 -0.4L7.8 -1L7.7 -1.6L7.4 -2.3L7.1 -2.9L6.7 -3.4ZM5.6 -3.3L5 -3.6L4.2 -3.9L3.4 -4.1L2.4 -4.4L1.8 -4.5L1.1 -4.6L0.4 -4.6L-0.3 -4.6L-1.3 -4.6L-2.3 -4.6L-3.3 -4.5L-4.3 -4.4L-5.1 -4.2L-5.8 -4.1L-6.5 -4L-7.5 -3.8L-8.2 -3.6L-8.9 -3.4L-9.5 -3L-9.9 -2.4L-10.2 -1.8L-10.4 -1.2L-10.5 -0.6L-10.6 0.2L-10.5 0.8L-10.3 1.4L-10.1 2L-9.8 2.6L-9.3 3.2L-8.7 3.4L-7.9 3.7L-7 3.9L-5.8 4.1L-5.1 4.2L-4.3 4.4L-3.3 4.5L-2.3 4.6L-1.3 4.6L-0.3 4.6L0.4 4.6L1.1 4.6L1.8 4.5L2.4 4.4L3.4 4.1L4.2 3.9L5 3.6L5.6 3.3L6 2.8L6.4 2.2L6.7 1.5L6.9 0.9L7 0.2L7 -0.5L6.8 -1.2L6.6 -1.9L6.2 -2.5L5.8 -3.1ZM5.1 -2.7L4.5 -3L3.8 -3.2L3.1 -3.4L2.1 -3.6L1 -3.8L0.3 -3.8L-0.3 -3.8L-1.2 -3.8L-2.2 -3.8L-3.1 -3.7L-4 -3.6L-4.8 -3.5L-5.5 -3.4L-6.1 -3.3L-7 -3.1L-7.7 -3L-8.3 -2.8L-8.9 -2.5L-9.3 -1.9L-9.6 -1.3L-9.8 -0.6L-9.8 0L-9.7 0.7L-9.6 1.3L-9.3 1.9L-9 2.4L-8.5 2.8L-7.7 3L-7 3.1L-6.1 3.3L-5.5 3.4L-4.8 3.5L-4 3.6L-3.1 3.7L-2.2 3.8L-1.2 3.8L-0.3 3.8L0.3 3.8L1 3.8L1.6 3.7L2.7 3.5L3.5 3.3L4.1 3.1L4.7 2.9L5.2 2.6L5.6 2.1L5.9 1.6L6.1 0.8L6.2 0.1L6.2 -0.6L6 -1.3L5.7 -1.8L5.4 -2.4ZM4.6 -2.3L3.9 -2.5L3.1 -2.7L2.4 -2.9L1.4 -3.1L0.3 -3.2L-1.2 -3.2L-2.1 -3.1L-3 -3.1L-3.8 -3L-4.6 -2.9L-5.2 -2.8L-6.3 -2.7L-7 -2.5L-7.7 -2.4L-8.3 -2.2L-8.7 -1.7L-9 -1L-9.1 -0.4L-9.2 0.2L-9.1 0.9L-8.8 1.4L-8.5 2L-8 2.3L-7.3 2.5L-6.7 2.6L-5.8 2.7L-4.6 2.9L-3.8 3L-3 3.1L-2.1 3.1L-1.2 3.2L-0.3 3.2L0.8 3.1L1.9 3L2.8 2.8L3.4 2.7L4.1 2.5L4.7 2.2L5.1 1.6L5.4 1.1L5.5 0.5L5.6 -0.2L5.4 -0.9L5.2 -1.5L4.8 -2.1ZM4.3 -1.9L3.6 -2.1L2.9 -2.3L2.2 -2.4L1.3 -2.6L0.2 -2.6L-1.1 -2.6L-2 -2.6L-2.8 -2.6L-3.6 -2.5L-4.4 -2.4L-5 -2.3L-6 -2.2L-6.7 -2.1L-7.4 -2L-8 -1.7L-8.4 -1.2L-8.6 -0.6L-8.6 0L-8.6 0.6L-8.4 1.2L-8 1.8L-7.4 2L-6.7 2.1L-6 2.2L-5 2.3L-4.4 2.4L-3.6 2.5L-2.8 2.6L-2 2.6L-1.1 2.6L-0.3 2.6L0.7 2.6L1.8 2.5L2.6 2.3L3.2 2.2L3.7 2L4.3 1.8L4.7 1.3L4.9 0.7L5 0L4.9 -0.7L4.7 -1.3L4.3 -1.8ZM3.9 -1.6L3.3 -1.7L2.6 -1.9L2 -2L1.2 -2.1L0.2 -2.2L-1.1 -2.2L-1.9 -2.2L-2.7 -2.1L-3.5 -2.1L-4.2 -2L-5.3 -1.9L-6.1 -1.8L-6.7 -1.7L-7.3 -1.6L-7.8 -1.2L-8.1 -0.6L-8.2 0L-8.1 0.7L-7.8 1.2L-7.3 1.6L-6.7 1.7L-6.1 1.8L-5.3 1.9L-4.2 2L-3.5 2.1L-2.7 2.1L-1.9 2.2L-1.1 2.2L-0.3 2.2L0.7 2.2L1.6 2.1L2.3 1.9L3.1 1.8L3.8 1.6L4.2 1.2L4.5 0.6L4.6 0L4.5 -0.6L4.2 -1.2ZM3.7 -1.3L3.1 -1.4L2.5 -1.6L1.9 -1.7L1.1 -1.8L0.2 -1.8L-1.1 -1.8L-1.9 -1.8L-2.6 -1.8L-3.4 -1.7L-4 -1.7L-5.1 -1.6L-5.9 -1.5L-6.7 -1.4L-7.4 -1.2L-7.7 -0.7L-7.8 -0.1L-7.8 0.5L-7.5 1.1L-6.9 1.4L-6.2 1.4L-5.6 1.5L-4.6 1.6L-3.4 1.7L-2.6 1.8L-1.9 1.8L-1.1 1.8L-0.3 1.8L0.6 1.8L1.5 1.7L2.2 1.6L2.9 1.5L3.5 1.3L4 0.9L4.2 0.3L4.2 -0.3L4 -0.9ZM3.5 -1.1L2.7 -1.2L2 -1.3L1.4 -1.4L0.6 -1.5L-0.3 -1.5L-1 -1.5L-1.8 -1.5L-2.6 -1.5L-3.3 -1.4L-3.9 -1.4L-5 -1.3L-5.7 -1.2L-6.5 -1.1L-7.2 -1L-7.5 -0.5L-7.5 0.1L-7.4 0.7L-6.9 1.1L-6.3 1.2L-5.4 1.3L-4.5 1.3L-3.3 1.4L-2.6 1.5L-1.8 1.5L-1 1.5L-0.3 1.5L0.6 1.5L1.4 1.4L2 1.3L2.7 1.2L3.3 1.1L3.8 0.6L3.9 0L3.8 -0.6ZM3.3 -0.9L2.6 -1L1.9 -1.1L1.3 -1.2L0.5 -1.2L-0.3 -1.3L-1 -1.3L-1.8 -1.2L-2.5 -1.2L-3.2 -1.2L-3.8 -1.1L-4.8 -1.1L-5.6 -1L-6.4 -0.9L-7 -0.9L-7.3 -0.3L-7.3 0.3L-6.9 0.9L-6.2 1L-5.3 1L-4.4 1.1L-3.2 1.2L-2.5 1.2L-1.8 1.2L-1 1.3L-0.3 1.3L0.5 1.2L1.3 1.2L1.9 1.1L2.6 1L3.2 0.9L3.6 0.4L3.6 -0.2L3.4 -0.8ZM3.1 -0.7L2.5 -0.8L1.8 -0.9L1.2 -1L0.5 -1L-0.3 -1L-1 -1L-1.7 -1L-2.5 -1L-3.1 -1L-3.7 -1L-4.7 -0.9L-5.5 -0.8L-6.2 -0.8L-6.8 -0.7L-7.1 -0.1L-7 0.5L-6.4 0.8L-5.8 0.8L-5.1 0.9L-4.3 0.9L-3.1 1L-2.5 1L-1.7 1L-1 1L-0.3 1L0.5 1L1.2 1L1.8 0.9L2.5 0.8L3.1 0.7L3.4 0.2L3.4 -0.4ZM3 -0.6L2.4 -0.7L1.7 -0.8L0.8 -0.8L0.1 -0.9L-1 -0.9L-1.7 -0.9L-2.4 -0.8L-3.1 -0.8L-4.2 -0.8L-5 -0.7L-5.7 -0.7L-6.4 -0.6L-6.9 -0.3L-6.8 0.4L-6.3 0.6L-5.4 0.7L-4.7 0.7L-3.7 0.8L-2.4 0.8L-1.7 0.9L-1 0.9L-0.3 0.9L0.4 0.9L1.2 0.8L2 0.7L2.6 0.7L3.2 0.4L3.2 -0.2ZM2.9 -0.5L2.3 -0.6L1.4 -0.7L0.8 -0.7L0.1 -0.7L-1 -0.7L-1.7 -0.7L-2.4 -0.7L-3 -0.7L-4.1 -0.6L-5 -0.6L-5.6 -0.6L-6.3 -0.5L-6.8 -0.1L-6.6 0.5L-5.8 0.6L-5 0.6L-4.1 0.6L-3 0.7L-2.4 0.7L-1.7 0.7L-1 0.7L-0.3 0.7L0.4 0.7L1.1 0.7L1.9 0.6L2.5 0.6L3.1 0.3L3 -0.3ZM2.8 -0.4L2.2 -0.5L1.4 -0.5L0.8 -0.6L0.1 -0.6L-1 -0.6L-1.7 -0.6L-2.3 -0.6L-3 -0.6L-4.1 -0.5L-4.9 -0.5L-5.5 -0.5L-6.2 -0.4L-6.7 0L-6.2 0.4L-5.5 0.5L-4.9 0.5L-4.1 0.5L-3 0.6L-2.3 0.6L-1.7 0.6L-1 0.6L-0.3 0.6L0.4 0.6L1.1 0.6L1.8 0.5L2.5 0.5L3 0.2ZM2.8 -0.3L2.1 -0.4L1.3 -0.5L0.7 -0.5L0 -0.5L-1 -0.5L-1.6 -0.5L-2.3 -0.5L-3 -0.5L-4 -0.4L-4.9 -0.4L-5.7 -0.4L-6.3 -0.4L-6.5 0.2L-5.9 0.4L-5.2 0.4L-4.5 0.4L-3.5 0.5L-2.3 0.5L-1.6 0.5L-1 0.5L-0.3 0.5L0.4 0.5L1 0.5L1.8 0.4L2.4 0.4L2.9 0ZM2.7 -0.3L2.1 -0.3L1.3 -0.4L0.4 -0.4L-0.3 -0.4L-1 -0.4L-1.6 -0.4L-2.3 -0.4L-2.9 -0.4L-4 -0.4L-4.8 -0.3L-5.6 -0.3L-6.3 -0.3L-6.1 0.3L-5.4 0.3L-4.4 0.4L-3.5 0.4L-2.3 0.4L-1.6 0.4L-1 0.4L-0.3 0.4L0.4 0.4L1 0.4L1.8 0.4L2.4 0.3L2.8 -0.2Z"/>
<path d="M2.4 0L135.8 -135.8M2.3 0L131.1 -140.4M2.2 0L128.7 -142.6M2.2 0L126.3 -144.8M2.1 0L122.4 -148M2 0L117.7 -151.8M1.9 0L112.2 -155.9M1.7 0L105.7 -160.4M1.5 0L97.8 -165.3M1.4 0L88.3 -170.6M1.1 0L77.2 -175.9M0.9 0L64.1 -181.1M0.6 0L49.1 -185.7M0.3 0L32.8 -189.3M0 0L16.3 -191.4M-0.3 0L0 -192.1M-0.9 0L-16.3 -191.4M-1.6 0L-32.8 -189.3M-2.2 0L-49.1 -185.7M-2.8 0L-64.1 -181.1M-3.3 0L-77.2 -175.9M-3.8 0L-88.3 -170.6M-4.2 0L-97.8 -165.3M-4.6 0L-105.7 -160.4M-4.9 0L-112.2 -155.9M-5.2 0L-117.7 -151.8M-5.4 0L-122.4 -148M-5.6 0L-126.3 -144.8M-5.7 0L-128.7 -142.6M-5.8 0L-131.1 -140.4M-6.1 0L-135.8 -135.8M-6.1 0L-135.8 135.8M-5.8 0L-131.1 140.4M-5.7 0L-128.7 142.6M-5.6 0L-126.3 144.8M-5.4 0L-122.4 148M-5.2 0L-117.7 151.8M-4.9 0L-112.2 155.9M-4.6 0L-105.7 160.4M-4.2 0L-97.8 165.3M-3.8 0L-88.3 170.6M-3.3 0L-77.2 175.9M-2.8 0L-64.1 181.1M-2.2 0L-49.1 185.7M-1.6 0L-32.8 189.3M-0.9 0L-16.3 191.4M-0.3 0L0 192.1M0 0L16.3 191.4M0.3 0L32.8 189.3M0.6 0L49.1 185.7M0.9 0L64.1 181.1M1.1 0L77.2 175.9M1.4 0L88.3 170.6M1.5 0L97.8 165.3M1.7 0L105.7 160.4M1.9 0L112.2 155.9M2 0L117.7 151.8M2.1 0L122.4 148M2.2 0L126.3 144.8M2.2 0L128.7 142.6M2.3 0L131.1 140.4M2.4 0L135.8 135.8"/>
</g>
<g transform="translate(400.7 213.4) scale(1.0349 1)" fill="none" stroke="#30c4b8" stroke-width="0.85">
<path d="M2.4 0L135.7 -135.9M2.4 0L135.6 -136.1M2.4 0L135.5 -136.2M2.4 0L135.3 -136.4M2.4 0L135.1 -136.6M2.4 0L134.8 -136.8M2.4 0L134.6 -137.1M2.4 0L134.3 -137.4M2.4 0L133.9 -137.8M2.4 0L133.4 -138.2M2.3 0L132.9 -138.7M2.3 0L132.3 -139.3M-5.9 0L-132.3 -139.3M-5.9 0L-132.9 -138.7M-6 0L-133.4 -138.2M-6 0L-133.9 -137.8M-6 0L-134.3 -137.4M-6 0L-134.6 -137.1M-6 0L-134.8 -136.8M-6 0L-135.1 -136.6M-6.1 0L-135.3 -136.4M-6.1 0L-135.5 -136.2M-6.1 0L-135.6 -136.1M-6.1 0L-135.7 -135.9M-6.1 0L-135.7 135.9M-6.1 0L-135.6 136.1M-6.1 0L-135.5 136.2M-6.1 0L-135.3 136.4M-6 0L-135.1 136.6M-6 0L-134.8 136.8M-6 0L-134.6 137.1M-6 0L-134.3 137.4M-6 0L-133.9 137.8M-6 0L-133.4 138.2M-5.9 0L-132.9 138.7M-5.9 0L-132.3 139.3M2.3 0L132.3 139.3M2.3 0L132.9 138.7M2.4 0L133.4 138.2M2.4 0L133.9 137.8M2.4 0L134.3 137.4M2.4 0L134.6 137.1M2.4 0L134.8 136.8M2.4 0L135.1 136.6M2.4 0L135.3 136.4M2.4 0L135.5 136.2M2.4 0L135.6 136.1M2.4 0L135.7 135.9"/>
</g>
<g transform="translate(400.7 213.4) scale(1.0349 1)" fill="none" stroke="#30c4b8" stroke-width="0.95">
<path d="M-6.1 0L-141.1 -130.4M-6.1 0L-146.1 -124.7M-6.1 0L-150.8 -119M-6.1 0L-155.3 -113.1M-6.1 0L-159.5 -107.1M-6.1 0L-163.4 -101M-6.1 0L-167.1 -94.8M-6.1 0L-170.5 -88.6M-6.1 0L-173.6 -82.3M-6.1 0L-176.5 -75.9M-6.1 0L-179.1 -69.5M-6.1 0L-181.4 -63.1M-6.1 0L-183.5 -56.7M-6.1 0L-185.4 -50.3M-6.1 0L-187 -43.9M-6.1 0L-188.4 -37.5M-6.1 0L-189.6 -31.1M-6.1 0L-190.5 -24.8M-6.1 0L-191.2 -18.5M-6.1 0L-191.7 -12.3M-6.1 0L-192 -6.1M-6.1 0L-192.1 0M-6.1 0L-192 6.7M-6.1 0L-191.6 13.4M-6.1 0L-191.1 20M-6.1 0L-190.3 26.5M-6.1 0L-189.2 33M-6.1 0L-188 39.4M-6.1 0L-186.6 45.7M-6.1 0L-184.9 52M-6.1 0L-183.1 58.1M-6.1 0L-181.1 64.2M-6.1 0L-178.9 70.1M-6.1 0L-176.5 75.9M-6.1 0L-173.9 81.6M-6.1 0L-171.1 87.2M-6.1 0L-168.2 92.7M-6.1 0L-165.2 98.1M-6.1 0L-162 103.3M-6.1 0L-158.6 108.4M-6.1 0L-155.1 113.3M-6.1 0L-151.5 118.1M-6.1 0L-147.8 122.8M-6.1 0L-143.9 127.3M-6.1 0L-139.9 131.6M2.4 0L141.4 130M2.4 0L146.7 124M2.4 0L151.8 117.8M2.4 0L156.5 111.4M2.4 0L160.9 104.9M2.4 0L165 98.3M2.4 0L168.9 91.6M2.4 0L172.4 84.8M2.4 0L175.6 77.8M2.4 0L178.6 70.9M2.4 0L181.2 63.8M2.4 0L183.5 56.7M2.4 0L185.6 49.6M2.4 0L187.3 42.5M2.4 0L188.8 35.4M2.4 0L190 28.2M2.4 0L190.9 21.1M2.4 0L191.6 14M2.4 0L192 7M2.4 0L192.1 0M2.4 0L192 -7M2.4 0L191.6 -14M2.4 0L190.9 -21.1M2.4 0L190 -28.2M2.4 0L188.8 -35.4M2.4 0L187.3 -42.5M2.4 0L185.6 -49.6M2.4 0L183.5 -56.7M2.4 0L181.2 -63.8M2.4 0L178.6 -70.9M2.4 0L175.6 -77.8M2.4 0L172.4 -84.8M2.4 0L168.9 -91.6M2.4 0L165 -98.3M2.4 0L160.9 -104.9M2.4 0L156.5 -111.4M2.4 0L151.8 -117.8M2.4 0L146.7 -124M2.4 0L141.4 -130"/>
</g>
<path d="M394.4 213.4L260.1 77.6L258.3 79.4L273.1 97.0L296.6 122.1L350.4 176.3L381.1 205.1L394.1 213.7ZM403.2 213.4L541.3 77.6L543.1 79.4L527.8 97.0L503.6 122.2L448.3 176.4L416.8 205.1L403.5 213.7ZM394.4 213.4L260.1 349.2L258.3 347.4L273.1 329.8L296.6 304.7L350.4 250.5L381.1 221.7L394.1 213.1ZM403.2 213.4L541.3 349.2L543.1 347.4L527.8 329.8L503.6 304.6L448.3 250.4L416.8 221.7L403.5 213.1Z" fill="#30c4b8" opacity="0.4"/>
<path d="M394.4 213.4L260.1 77.6L259.3 78.4L274.6 95.5L298.3 120.4L352.0 174.8L382.2 203.9L394.1 213.7ZM403.2 213.4L541.3 77.6L542.1 78.4L526.3 95.5L502.0 120.5L446.7 174.8L415.6 204.0L403.5 213.7ZM394.4 213.4L260.1 349.2L259.3 348.4L274.6 331.3L298.3 306.4L352.0 252.0L382.2 222.9L394.1 213.1ZM403.2 213.4L541.3 349.2L542.1 348.4L526.3 331.3L502.0 306.3L446.7 252.0L415.6 222.8L403.5 213.1Z" fill="#30c4b8"/>
<ellipse cx="383.5" cy="213.4" rx="17" ry="16" fill="url(#blob)"/>
<ellipse cx="414.5" cy="213.4" rx="17" ry="16" fill="url(#blob)"/>
<ellipse cx="399" cy="213.4" rx="10" ry="11" fill="url(#blob)"/>
<rect x="394.4" y="213" width="8.8" height="1" fill="#9ad0e4"/>
<!-- legend -->
<rect x="0" y="4" width="51" height="21" fill="#000"/>
<rect x="0" y="25" width="51" height="15" fill="#ff0000"/>
<rect x="0" y="40" width="51" height="190" fill="url(#lg)"/>
<rect x="0" y="230" width="51" height="14" fill="#00ffff"/>
<text x="25.5" y="18" fill="#f0f0f0" text-anchor="middle" font-size="8.6" textLength="24" lengthAdjust="spacingAndGlyphs">Quality</text>
<text x="25.5" y="35.8" fill="#400000" text-anchor="middle" font-size="8.6" textLength="10.3" lengthAdjust="spacingAndGlyphs">&lt; 0</text>
<text x="25.5" y="55" fill="#202020" text-anchor="middle" font-size="8.6" textLength="17.2" lengthAdjust="spacingAndGlyphs">&lt; 0.1</text>
<text x="25.5" y="76" fill="#202020" text-anchor="middle" font-size="8.6" textLength="17.2" lengthAdjust="spacingAndGlyphs">&lt; 0.2</text>
<text x="25.5" y="97" fill="#202020" text-anchor="middle" font-size="8.6" textLength="17.2" lengthAdjust="spacingAndGlyphs">&lt; 0.3</text>
<text x="25.5" y="118" fill="#202020" text-anchor="middle" font-size="8.6" textLength="17.2" lengthAdjust="spacingAndGlyphs">&lt; 0.4</text>
<text x="25.5" y="139" fill="#202020" text-anchor="middle" font-size="8.6" textLength="17.2" lengthAdjust="spacingAndGlyphs">&lt; 0.5</text>
<text x="25.5" y="160" fill="#202020" text-anchor="middle" font-size="8.6" textLength="17.2" lengthAdjust="spacingAndGlyphs">&lt; 0.6</text>
<text x="25.5" y="181" fill="#202020" text-anchor="middle" font-size="8.6" textLength="17.2" lengthAdjust="spacingAndGlyphs">&lt; 0.7</text>
<text x="25.5" y="202" fill="#e8e8e8" text-anchor="middle" font-size="8.6" textLength="17.2" lengthAdjust="spacingAndGlyphs">&lt; 0.8</text>
<text x="25.5" y="223" fill="#e8e8e8" text-anchor="middle" font-size="8.6" textLength="17.2" lengthAdjust="spacingAndGlyphs">&lt; 0.9</text>
<text x="25.5" y="239.5" fill="#202020" text-anchor="middle" font-size="8.6" textLength="10.3" lengthAdjust="spacingAndGlyphs">&gt; 1</text>

<!-- logo -->
<g>
<rect x="724.2" y="17" width="6.8" height="24.3" fill="#fff"/>
<path d="M718 30 L724.5 41.3 L724.5 34 Z" fill="#fff"/>
<rect x="680.5" y="40.3" width="3" height="1" fill="#f4f4f4"/>
<text x="732.3" y="41.2" font-size="37" fill="#f7c200" stroke="#f7c200" stroke-width="0.7" style="font-family:'Liberation Serif',serif" textLength="56" lengthAdjust="spacingAndGlyphs">SYS</text>
<circle cx="702" cy="31.9" r="20.4" fill="url(#bub)" stroke="#2b7fd0" stroke-width="1.1"/>
<path d="M690.2 48.4 Q702 49.8 713.8 48.1 Q716.2 47.2 717.4 45.3 A20.4 20.4 0 0 1 687.6 46.4 Q688.6 47.9 690.2 48.4 Z" fill="url(#cres)"/>
<path d="M683.2 40 A20.4 20.4 0 0 0 720.8 40" stroke="#2375c8" stroke-width="1.5" fill="none"/>
<path d="M691.8 50.6 q1.5 1.2 4 1.5" stroke="#fff" stroke-width="1.5" fill="none" stroke-linecap="round"/>
<text x="692" y="35.9" font-size="9" fill="#3a3a3a" textLength="20.2" lengthAdjust="spacingAndGlyphs">0KB/s</text>
</g>
<!-- right widget -->
<g clip-path="url(#vp)">
<rect x="794" y="275.5" width="12" height="53" rx="3" fill="#000" opacity="0.10"/>
<rect x="795.8" y="277" width="10" height="49.7" rx="2" fill="#505050"/>
<rect x="798.3" y="303" width="3" height="21.5" fill="url(#bar2)"/>
</g>
<!-- triad -->
<g>
<rect x="742.2" y="341" width="2.6" height="31" fill="#00a800"/>
<path d="M743.5 329.2 L748.7 341.6 L738.3 341.6 Z" fill="#00a800"/>
<rect x="744" y="370.9" width="30" height="3" fill="#c80000"/>
<path d="M786.6 372.4 L773.8 367.2 L773.8 377.6 Z" fill="#c00000"/>
<text x="744.8" y="369.2" font-size="7" fill="#2828ff" font-weight="bold" font-style="italic" style="font-family:'Liberation Serif',serif">Z</text>
<circle cx="743.4" cy="372.4" r="4.8" fill="#000080"/>
<circle cx="765.3" cy="350.4" r="4.5" fill="url(#cy)"/>
<text x="746.8" y="319.6" font-size="8" fill="#18e018" text-anchor="middle" style="font-family:'Liberation Serif',serif">Y</text>
<text x="796" y="372.5" font-size="8" fill="#ff2020" font-weight="bold" style="font-family:'Liberation Serif',serif">X</text>
</g>
<!-- IME toolbar -->
<g>
<rect x="557.6" y="374" width="138.6" height="20" rx="4.5" fill="#000" opacity="0.06"/>
<rect x="557.2" y="373.4" width="138.6" height="19.8" rx="4.5" fill="#000" opacity="0.10"/>
<rect x="556.8" y="372.6" width="138.4" height="19.8" rx="4.5" fill="#f5f5f8" stroke="#d0d0da" stroke-width="0.8"/>
<line x1="590.5" x2="590.5" y1="373" y2="392" stroke="#f0b8b8" stroke-width="0.6"/>
<line x1="591.8" x2="591.8" y1="373" y2="392" stroke="#f6d6d6" stroke-width="0.5"/>
<g transform="translate(575.4 382.5) rotate(-10)">
<rect x="-8.7" y="-8.4" width="17.4" height="16.8" rx="2.4" fill="url(#sg)"/>
<path d="M8.7 4.2 L8.7 8.4 L3.4 8.4 Z" fill="#fff"/>
<path d="M8.7 4.2 L3.4 8.4 L4.6 4.9 Z" fill="#f4c4a8"/>
<text x="0" y="5.3" font-size="14.5" font-weight="bold" fill="#fff" text-anchor="middle" transform="scale(1.38 1)">S</text>
</g>
<text x="598" y="388" font-size="11.5" fill="#3c82d2" font-weight="bold" style="font-family:'Liberation Sans','Noto Sans CJK SC',sans-serif" textLength="10.5" lengthAdjust="spacingAndGlyphs">中</text>
<path d="M619.5 378.3 A5 5 0 1 1 613.8 385.6 A6.2 6.2 0 0 0 619.5 378.3 Z" fill="#3c82d2"/>
<circle cx="630.3" cy="380.4" r="1.6" fill="none" stroke="#3c82d2" stroke-width="0.9"/>
<path d="M633.4 384 h1.8 v1.6 q0 1.5 -1.6 2.2 l-0.3 -0.5 q0.8 -0.6 0.8 -1.4 h-0.7 z" fill="#3c82d2"/>
<rect x="641" y="379" width="12.4" height="8.2" fill="#3c82d2"/>
<path d="M642.3 380.7h10M642.3 382.6h10" stroke="#fff" stroke-width="0.9" stroke-dasharray="1.2 1"/>
<path d="M643.5 385h7.4" stroke="#fff" stroke-width="1"/>
<circle cx="663.3" cy="379.7" r="2.3" fill="#8c8c8c"/>
<path d="M659.2 387 v-1.8 q0 -2.6 2.6 -2.6 h3 q2.6 0 2.6 2.6 v1.8 z" fill="#8c8c8c"/>
<path d="M672.6 386.9 L677.3 382.2 A3 3 0 0 1 681 378.6 L679.3 380.4 L680.6 381.7 L682.4 380 A3 3 0 0 1 678.8 383.7 L674.1 388.4 Z" fill="#3c82d2"/>
</g>
<!-- scrollbar & separator -->
<rect x="324.5" y="433.5" width="12" height="61.5" fill="#f6f6f6"/>
<g>
<rect x="324.5" y="433.5" width="12" height="11.5" fill="#f0f0f0"/>
<path d="M324.5 445 V433.5 H336.5" stroke="#fff" stroke-width="1" fill="none"/>
<path d="M324.5 445 H336.5 V433.5" stroke="#707070" stroke-width="1" fill="none"/>
<path d="M327.9 441 h5.4 l-2.7 -3 z" fill="#000"/>
<rect x="324.5" y="478.6" width="12" height="4.4" fill="#f0f0f0"/>
<path d="M324.5 483 H336.5 V478.6" stroke="#808080" stroke-width="0.8" fill="none"/>
<rect x="324.5" y="483.5" width="12" height="11.5" fill="#f0f0f0"/>
<path d="M324.5 495 V483.5 H336.5" stroke="#fff" stroke-width="1" fill="none"/>
<path d="M324.5 495 H336.5 V483.5" stroke="#707070" stroke-width="1" fill="none"/>
<path d="M327.9 488 h5.4 l-2.7 3 z" fill="#000"/>
</g>
<line x1="342.3" x2="342.3" y1="433.5" y2="516.8" stroke="#6c6c6c" stroke-width="1.2"/>
<line x1="341.1" x2="341.1" y1="433.5" y2="516" stroke="#fcfcfc" stroke-width="1"/>
<line x1="340" x2="342.9" y1="516.4" y2="516.4" stroke="#7a7a7a" stroke-width="0.8"/>
<!-- histogram -->
<rect x="391.2" y="441" width="404.3" height="55.3" fill="#fff"/>
<clipPath id="pc"><rect x="380" y="441" width="420" height="82"/></clipPath>
<line x1="391.5" x2="793.5" y1="489.3" y2="489.3" stroke="#7a7a7a" stroke-width="0.8"/>
<line x1="391.5" x2="793.5" y1="482.3" y2="482.3" stroke="#7a7a7a" stroke-width="0.8"/>
<line x1="391.5" x2="793.5" y1="475.3" y2="475.3" stroke="#7a7a7a" stroke-width="0.8"/>
<line x1="391.5" x2="793.5" y1="468.3" y2="468.3" stroke="#7a7a7a" stroke-width="0.8"/>
<line x1="391.5" x2="793.5" y1="461.3" y2="461.3" stroke="#7a7a7a" stroke-width="0.8"/>
<line x1="391.5" x2="793.5" y1="454.3" y2="454.3" stroke="#7a7a7a" stroke-width="0.8"/>
<line x1="391.5" x2="793.5" y1="447.3" y2="447.3" stroke="#7a7a7a" stroke-width="0.8"/>
<line x1="391.5" x2="793.5" y1="496.0" y2="496.0" stroke="#9a9a9a" stroke-width="1"/>
<rect x="391.0" y="483.0" width="18.2" height="12.7" fill="#ffa500" stroke="#ff0000" stroke-width="1.3" clip-path="url(#pc)"/>
<rect x="409.8" y="493.3" width="18.3" height="2.5" fill="#ffa500" stroke="#ffa500" stroke-width="1" clip-path="url(#pc)"/>
<rect x="428.6" y="493.9" width="18.4" height="1.9" fill="#ffa500" stroke="#ffa500" stroke-width="1" clip-path="url(#pc)"/>
<rect x="447.4" y="495.1" width="18.3" height="0.7" fill="#ffb000" stroke="#ffb000" stroke-width="1" clip-path="url(#pc)"/>
<rect x="466.3" y="493.9" width="18.4" height="1.9" fill="#ffc000" stroke="#ffc000" stroke-width="1" clip-path="url(#pc)"/>
<rect x="504.0" y="493.9" width="18.3" height="1.9" fill="#ffd800" stroke="#ffd800" stroke-width="1" clip-path="url(#pc)"/>
<rect x="541.7" y="493.9" width="18.3" height="1.9" fill="#ffff00" stroke="#ffff00" stroke-width="1" clip-path="url(#pc)"/>
<rect x="579.4" y="491.0" width="18.4" height="4.8" fill="#000000" stroke="#50ff00" stroke-width="1" clip-path="url(#pc)"/>
<rect x="598.2" y="479.9" width="18.4" height="15.9" fill="#000000" stroke="#40ff00" stroke-width="1" clip-path="url(#pc)"/>
<rect x="617.1" y="492.1" width="18.4" height="3.7" fill="#000000" stroke="#30f000" stroke-width="1" clip-path="url(#pc)"/>
<rect x="636.0" y="492.1" width="18.3" height="3.7" fill="#000000" stroke="#20e000" stroke-width="1" clip-path="url(#pc)"/>
<rect x="654.8" y="472.9" width="18.4" height="22.9" fill="#000000" stroke="#10e020" stroke-width="1" clip-path="url(#pc)"/>
<rect x="673.6" y="486.3" width="18.4" height="9.5" fill="#000000" stroke="#008030" stroke-width="1" clip-path="url(#pc)"/>
<rect x="692.5" y="439.1" width="18.4" height="56.7" fill="#000000" stroke="#008080" stroke-width="1" clip-path="url(#pc)"/>
<rect x="711.3" y="439.1" width="18.4" height="56.7" fill="#000000" stroke="#0060a0" stroke-width="1" clip-path="url(#pc)"/>
<rect x="730.2" y="439.1" width="18.3" height="56.7" fill="#000000" stroke="#0030e0" stroke-width="1" clip-path="url(#pc)"/>
<rect x="749.0" y="439.1" width="18.4" height="56.7" fill="#000000" stroke="#0000ff" stroke-width="1" clip-path="url(#pc)"/>
<line x1="410.2" x2="427.1" y1="494.3" y2="494.3" stroke="#222" stroke-width="0.9"/>
<path d="M701.6 444 l3.8 5.2 h-2.3 v7.4 h-3 v-7.4 h-2.3 z" fill="#0000ff"/>
<path d="M720.5 444 l3.8 5.2 h-2.3 v7.4 h-3 v-7.4 h-2.3 z" fill="#0000ff"/>
<path d="M739.3 444 l3.8 5.2 h-2.3 v7.4 h-3 v-7.4 h-2.3 z" fill="#0000ff"/>
<path d="M758.2 444 l3.8 5.2 h-2.3 v7.4 h-3 v-7.4 h-2.3 z" fill="#0000ff"/>
<line x1="390.4" x2="390.4" y1="440.2" y2="502" stroke="#111" stroke-width="1.3"/>
<line x1="384.5" x2="390.4" y1="497.4" y2="497.4" stroke="#222" stroke-width="1"/>
<text x="383" y="500.5" text-anchor="end" font-size="8.6" fill="#222" textLength="4" lengthAdjust="spacingAndGlyphs">0</text>
<line x1="387.6" x2="390.4" y1="490.3" y2="490.3" stroke="#333" stroke-width="1"/>
<line x1="384.5" x2="390.4" y1="483.2" y2="483.2" stroke="#222" stroke-width="1"/>
<text x="383" y="486.3" text-anchor="end" font-size="8.6" fill="#222" textLength="8" lengthAdjust="spacingAndGlyphs">24</text>
<line x1="387.6" x2="390.4" y1="476.1" y2="476.1" stroke="#333" stroke-width="1"/>
<line x1="384.5" x2="390.4" y1="469.0" y2="469.0" stroke="#222" stroke-width="1"/>
<text x="383" y="472.1" text-anchor="end" font-size="8.6" fill="#222" textLength="8" lengthAdjust="spacingAndGlyphs">48</text>
<line x1="387.6" x2="390.4" y1="461.8" y2="461.8" stroke="#333" stroke-width="1"/>
<line x1="384.5" x2="390.4" y1="454.7" y2="454.7" stroke="#222" stroke-width="1"/>
<text x="383" y="457.8" text-anchor="end" font-size="8.6" fill="#222" textLength="8" lengthAdjust="spacingAndGlyphs">72</text>
<line x1="387.6" x2="390.4" y1="447.6" y2="447.6" stroke="#333" stroke-width="1"/>
<line x1="384.5" x2="390.4" y1="440.5" y2="440.5" stroke="#222" stroke-width="1"/>
<text x="383" y="443.6" text-anchor="end" font-size="8.6" fill="#222" textLength="8" lengthAdjust="spacingAndGlyphs">96</text>
<text x="390.4" y="512" text-anchor="middle" font-size="8.6" fill="#333" textLength="4" lengthAdjust="spacingAndGlyphs">0</text>
<line x1="428.1" x2="428.1" y1="498" y2="502" stroke="#222" stroke-width="1"/>
<text x="428.1" y="512" text-anchor="middle" font-size="8.6" fill="#333" textLength="11" lengthAdjust="spacingAndGlyphs">0.1</text>
<line x1="465.8" x2="465.8" y1="498" y2="502" stroke="#222" stroke-width="1"/>
<text x="465.8" y="512" text-anchor="middle" font-size="8.6" fill="#333" textLength="11" lengthAdjust="spacingAndGlyphs">0.2</text>
<line x1="503.5" x2="503.5" y1="498" y2="502" stroke="#222" stroke-width="1"/>
<text x="503.5" y="512" text-anchor="middle" font-size="8.6" fill="#333" textLength="11" lengthAdjust="spacingAndGlyphs">0.3</text>
<line x1="541.2" x2="541.2" y1="498" y2="502" stroke="#222" stroke-width="1"/>
<text x="541.2" y="512" text-anchor="middle" font-size="8.6" fill="#333" textLength="11" lengthAdjust="spacingAndGlyphs">0.4</text>
<line x1="578.9" x2="578.9" y1="498" y2="502" stroke="#222" stroke-width="1"/>
<text x="578.9" y="512" text-anchor="middle" font-size="8.6" fill="#333" textLength="11" lengthAdjust="spacingAndGlyphs">0.5</text>
<line x1="616.6" x2="616.6" y1="498" y2="502" stroke="#222" stroke-width="1"/>
<text x="616.6" y="512" text-anchor="middle" font-size="8.6" fill="#333" textLength="11" lengthAdjust="spacingAndGlyphs">0.6</text>
<line x1="654.3" x2="654.3" y1="498" y2="502" stroke="#222" stroke-width="1"/>
<text x="654.3" y="512" text-anchor="middle" font-size="8.6" fill="#333" textLength="11" lengthAdjust="spacingAndGlyphs">0.7</text>
<line x1="692.0" x2="692.0" y1="498" y2="502" stroke="#222" stroke-width="1"/>
<text x="692.0" y="512" text-anchor="middle" font-size="8.6" fill="#333" textLength="11" lengthAdjust="spacingAndGlyphs">0.8</text>
<line x1="729.7" x2="729.7" y1="498" y2="502" stroke="#222" stroke-width="1"/>
<text x="729.7" y="512" text-anchor="middle" font-size="8.6" fill="#333" textLength="11" lengthAdjust="spacingAndGlyphs">0.9</text>
<line x1="767.4" x2="767.4" y1="498" y2="502" stroke="#222" stroke-width="1"/>
<text x="767.4" y="512" text-anchor="middle" font-size="8.6" fill="#333" textLength="4" lengthAdjust="spacingAndGlyphs">1</text>

</svg>
</div></body></html>
